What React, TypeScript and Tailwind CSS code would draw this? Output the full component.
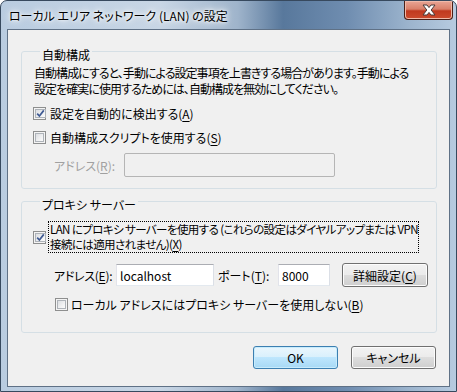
const font = "font-['Noto_Sans_CJK_JP','Noto_Sans',sans-serif] [font-feature-settings:'palt']";

function Check({ checked }: { checked?: boolean }) {
  return (
    <span className="w-[13px] h-[13px] shrink-0 flex border border-[#8e8f8f] bg-[#f4f4f4] p-px">
      <span className="flex-1 flex items-center justify-center border border-[#aeb3b9] bg-[linear-gradient(135deg,#dcdee2_0%,#f0f1f2_60%,#fbfbfb_100%)]">
        {checked && (
          <svg width="9" height="9" viewBox="0 0 9 9">
            <path d="M1.2 4.6 L3.4 7 L7.8 1.4" fill="none" stroke="#3f5a93" strokeWidth="1.7" />
          </svg>
        )}
      </span>
    </span>
  );
}

function Key({ k }: { k: string }) {
  return (
    <>
      (<u className="underline-offset-[2px]">{k}</u>)
    </>
  );
}

function Button({ label, primary }: { label: React.ReactNode; primary?: boolean }) {
  return (
    <button
      className={
        primary
          ? "w-[85px] h-[23px] rounded-[3px] border border-[#3c7fb1] bg-[linear-gradient(to_bottom,#eaf6fd_0%,#d9f0fc_50%,#bee6fd_50%,#a7d9f5_100%)] shadow-[inset_0_0_0_1px_#c8ecfc] text-black"
          : "w-[85px] h-[23px] rounded-[3px] border border-[#707070] bg-[linear-gradient(to_bottom,#f2f2f2_0%,#ebebeb_50%,#dddddd_50%,#cfcfcf_100%)] shadow-[inset_0_0_0_1px_#fcfcfc] text-black"
      }
    >
      {label}
    </button>
  );
}

function TextBox({ value, className }: { value?: string; className: string }) {
  return (
    <div
      className={
        "h-[22px] bg-white border border-[#abadb3] border-l-[#e2e3ea] border-r-[#dbdfe6] border-b-[#e3e9ef] flex items-center px-[3px] " +
        className
      }
    >
      {value}
    </div>
  );
}

export default function App() {
  return (
    <div className={"w-[457px] h-[392px] flex flex-col overflow-hidden rounded-t-[7px] border border-[#37495e] text-[12px] leading-[15px] text-black whitespace-nowrap bg-[linear-gradient(to_right,#b9cce0_0%,#c8d6e5_35%,#9fb4cb_52%,#58789c_62%,#6f8db0_76%,#9db5ce_90%,#b7cbe0_100%)] " + font}>
      <div className="h-[28px] flex items-start justify-between shrink-0">
        <span className="pl-[8px] pt-[7px] [text-shadow:0_0_6px_#fff,0_0_10px_#fff,0_0_3px_#fff]">
          ローカル エリア ネットワーク (LAN) の設定
        </span>
        <div className="mr-[3px] w-[49px] h-[19px] rounded-b-[4px] border border-t-0 border-[#4b1f17] bg-[linear-gradient(to_bottom,#e9a595_0%,#d9806a_45%,#c0391f_55%,#cc4b2e_100%)] shadow-[inset_0_0_0_1px_#f0b9a9] flex items-center justify-center">
          <svg width="16" height="12" viewBox="0 0 16 12">
            <path
              d="M2 1 H6 L8 3.6 L10 1 H14 L10.2 6 L14 11 H10 L8 8.4 L6 11 H2 L5.8 6 Z"
              fill="#ffffff"
              stroke="#4a3a38"
              strokeWidth="1"
              strokeLinejoin="round"
            />
          </svg>
        </div>
      </div>

      <div className="flex-1 mx-[6px] mb-[4px] border border-[#5f7186] bg-[#f0f0f0] flex flex-col pl-[13px] pr-[12px]">
        <fieldset className="mt-[9px] border border-[#d5dfe5] rounded-[3px] pl-[12px] pb-[11px]">
          <legend className="ml-[6px] px-[2px] pt-[8px] leading-[16px]">自動構成</legend>
          <p className="mt-[2px] leading-[16px] tracking-[-0.95px]">
            自動構成にすると、手動による設定事項を上書きする場合があります。手動による
            <br />
            設定を確実に使用するためには、自動構成を無効にしてください。
          </p>
          <div className="mt-[9px] flex items-center gap-[4px] -ml-px">
            <Check checked />
            <span>
              設定を自動的に検出する<Key k="A" />
            </span>
          </div>
          <div className="mt-[9px] flex items-center gap-[4px] -ml-px">
            <Check />
            <span>
              自動構成スクリプトを使用する<Key k="S" />
            </span>
          </div>
          <div className="mt-[8px] flex items-center ml-[20px]">
            <span className="w-[70px] text-[#a0a0a0]">
              アドレス<Key k="R" />:
            </span>
            <div className="w-[211px] h-[24px] border border-[#b5b5b5] rounded-[2px] bg-[#f0f0f0]" />
          </div>
        </fieldset>

        <fieldset className="mt-0 border border-[#d5dfe5] rounded-[3px] pl-[12px] pb-[20px]">
          <legend className="ml-[6px] px-[2px] pt-[8px] leading-[16px]">プロキシ サーバー</legend>
          <div className="mt-[8px] flex items-center gap-[2px] -ml-px">
            <Check checked />
            <span className="w-[371px] border border-dotted border-black pl-px leading-[15px] text-[11.5px] tracking-[-0.6px]">
              LAN にプロキシ サーバーを使用する (これらの設定はダイヤルアップまたは VPN
              <br />
              接続には適用されません)<Key k="X" />
            </span>
          </div>
          <div className="mt-[10px] flex items-center ml-[20px]">
            <span className="w-[62px] tracking-[-0.3px]">
              アドレス<Key k="E" />:
            </span>
            <TextBox value="localhost" className="w-[98px]" />
            <span className="ml-[4px] w-[60px]">
              ポート<Key k="T" />:
            </span>
            <TextBox value="8000" className="w-[52px]" />
            <div className="ml-[12px]">
              <button className="w-[86px] h-[24px] rounded-[3px] border border-[#707070] bg-[linear-gradient(to_bottom,#f2f2f2_0%,#ebebeb_50%,#dddddd_50%,#cfcfcf_100%)] shadow-[inset_0_0_0_1px_#fcfcfc]">
                詳細設定<Key k="C" />
              </button>
            </div>
          </div>
          <div className="mt-[10px] flex items-center gap-[3px] ml-[21px]">
            <Check />
            <span>
              ローカル アドレスにはプロキシ サーバーを使用しない<Key k="B" />
            </span>
          </div>
        </fieldset>

        <div className="mt-[13px] flex justify-end gap-[13px] pr-px">
          <Button label="OK" primary />
          <Button label="キャンセル" />
        </div>
      </div>
    </div>
  );
}
